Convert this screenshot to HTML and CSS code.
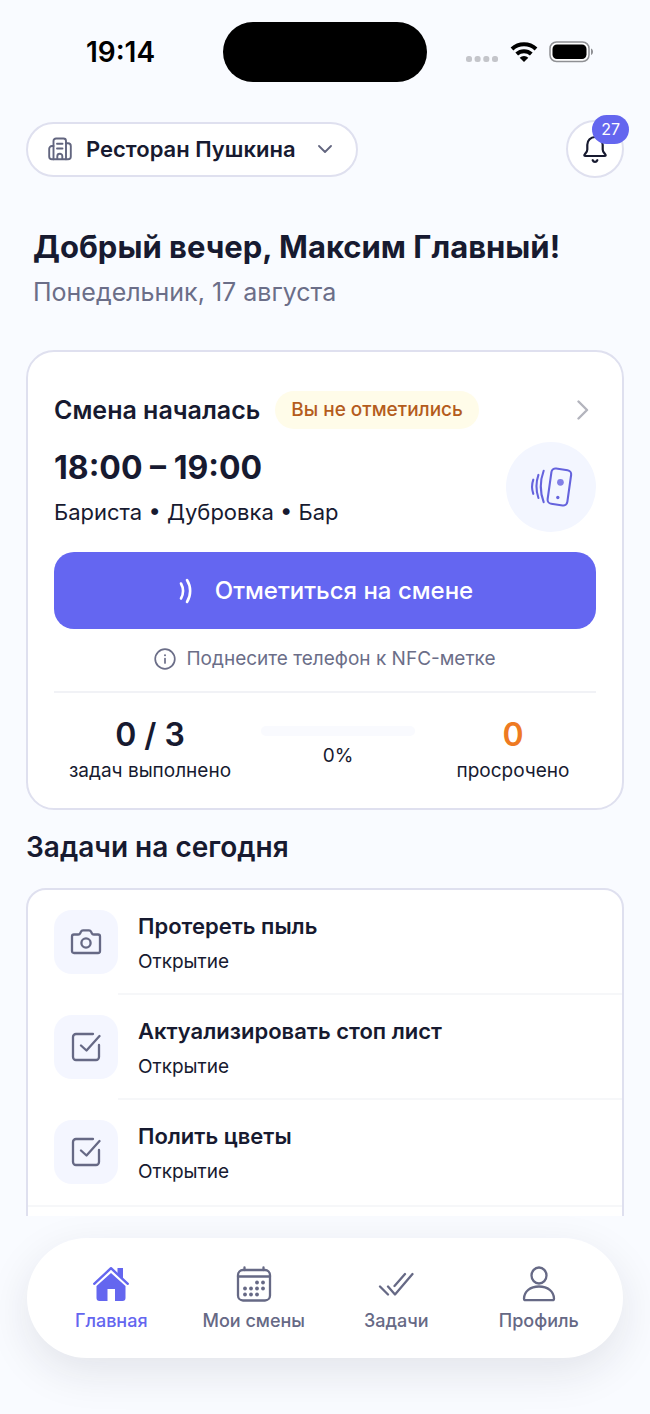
FILE: index.html
```html
<!DOCTYPE html>
<html lang="ru">
<head>
<meta charset="utf-8">
<meta name="viewport" content="width=device-width, initial-scale=1">
<title>Главная</title>
<link rel="stylesheet" href="styles.css">
</head>
<body>
<div class="status">
  <time class="status-time">19:14</time>
  <div class="island"></div>
  <div class="status-icons">
    <svg width="34" height="8" viewBox="0 0 34 8" fill="#c4c5ca"><rect x="1" y="1" width="6" height="6" rx="2.5"/><rect x="9.600" y="1" width="6" height="6" rx="2.500"/><rect x="18.300" y="1" width="6" height="6" rx="2.500"/><rect x="27" y="1" width="6" height="6" rx="2.500"/></svg>
    <svg class="wifi" width="28" height="22" viewBox="0 0 28 22" fill="none" stroke="#000" stroke-width="4"><path d="M2 8a17.500 17.500 0 0 1 24 0"/><path d="M6.700 13a10.800 10.800 0 0 1 14.600 0"/><path d="M14 21l-4.300-4.300a6.200 6.200 0 0 1 8.600 0z" fill="#000" stroke="none"/></svg>
    <svg width="46" height="22" viewBox="0 0 46 22"><rect x="1" y="1" width="39" height="19.500" rx="6.500" fill="#fff" stroke="#8f9094" stroke-width="1.500"/><rect x="3.500" y="3.500" width="34" height="14.500" rx="4.500"/><path d="M42 7.500c2.700 1 2.700 5.500 0 6.500z" fill="#8f9094"/></svg>
  </div>
</div>

<main class="content">
  <header class="topbar">
    <button class="place" type="button" aria-haspopup="listbox">
      <svg width="24" height="24" viewBox="0 0 24 24" fill="none" stroke="#62657f" stroke-width="1.900" stroke-linecap="round" stroke-linejoin="round"><path d="M5.500 22.300V4a2.500 2.500 0 0 1 2.500-2.500h7.500A2.500 2.500 0 0 1 18 4v18.300"/><path d="M5.500 9H4a2.800 2.800 0 0 0-2.800 2.800v7.700A2.800 2.800 0 0 0 4 22.300h16a2.800 2.800 0 0 0 2.800-2.800V9A2.800 2.800 0 0 0 20 6.200h-2"/><path d="M9 6.800h5.500M9 11.500h5.500M9.300 22v-2.800a2.500 2.500 0 0 1 5 0V22"/></svg>
      <span>Ресторан Пушкина</span>
      <svg class="place-arrow" width="14" height="8" viewBox="0 0 14 8" fill="none" stroke="#62657f" stroke-width="1.800" stroke-linecap="round" stroke-linejoin="round"><path d="M1 1l6 6 6-6"/></svg>
    </button>
    <button class="bell" type="button" aria-label="Уведомления">
      <svg width="26" height="28" viewBox="0 0 26 28" fill="none" stroke="#171a30" stroke-width="2.200" stroke-linecap="round" stroke-linejoin="round"><path d="M5.300 14.500V9.700a7.700 7.700 0 0 1 15.400 0v4.800c0 2 1 2.800 2.400 4.600 1 1.300.7 1.900-.7 1.900H3.600c-1.400 0-1.700-.6-.7-1.900 1.400-1.800 2.400-2.600 2.400-4.600z"/><path d="M10.700 25.200c.9 2.100 3.700 2.100 4.600 0"/></svg>
      <span class="badge">27</span>
    </button>
  </header>

  <section class="greeting">
    <h1>Добрый вечер, Максим Главный!</h1>
    <p>Понедельник, 17 августа</p>
  </section>

  <section class="card shift">
    <div class="shift-head">
      <h2>Смена началась</h2>
      <span class="chip">Вы не отметились</span>
      <svg class="shift-arrow" width="12" height="20" viewBox="0 0 12 20" fill="none" stroke="#b3b4bd" stroke-width="2.400" stroke-linecap="round" stroke-linejoin="round"><path d="M1.500 1.500L10 10l-8.500 8.500"/></svg>
    </div>
    <div class="shift-body">
      <div class="shift-info">
        <strong>18:00 – 19:00</strong>
        <span>Бариста • Дубровка • Бар</span>
      </div>
      <div class="nfc">
        <svg width="44" height="42" viewBox="0 0 42 40" fill="none" stroke="#6563dd" stroke-width="2" stroke-linecap="round" stroke-linejoin="round"><rect x="19.500" y="3" width="19" height="34" rx="4" transform="rotate(8 29 20)"/><circle cx="30" cy="15.500" r="3.200" fill="#817fe6" stroke="none"/><circle cx="27.500" cy="30" r="1.600" fill="#6563dd" stroke="none"/><path d="M14 4.500c-3.600 9.800-3.600 20.200 0 30M9 8.500c-2.600 7.500-2.600 14.500 0 22M4.100 13c-1.600 4.600-1.600 9 0 13.500"/></svg>
      </div>
    </div>
    <button class="primary" type="button">
      <svg width="16" height="28" viewBox="0 0 16 28" fill="none" stroke="#fff" stroke-width="2.600" stroke-linecap="round"><path d="M4 6.500c2.600 4.700 2.600 10.300 0 15M10 3c4.200 6.700 4.200 15.300 0 22"/></svg>
      <span>Отметиться на смене</span>
    </button>
    <p class="hint">
      <svg width="22" height="22" viewBox="0 0 22 22" fill="none" stroke="#6b6e88" stroke-width="1.700" stroke-linecap="round"><circle cx="11" cy="11" r="9.800"/><path d="M11 10.500v4.500"/><circle cx="11" cy="7.200" r="1" fill="#6b6e88" stroke="none"/></svg>
      <span>Поднесите телефон к NFC-метке</span>
    </p>
    <div class="stats">
      <div class="stat"><strong>0 / 3</strong><span>задач выполнено</span></div>
      <div class="stat progress"><div class="bar"></div><span>0%</span></div>
      <div class="stat late"><strong>0</strong><span>просрочено</span></div>
    </div>
  </section>

  <h2 class="section-title">Задачи на сегодня</h2>

  <ul class="card tasks">
    <li class="task">
      <div class="tile"><svg width="32" height="28" viewBox="0 0 32 28" fill="none" stroke="#666985" stroke-width="2.300" stroke-linecap="round" stroke-linejoin="round"><path d="M4 6.500h4.200c1 0 1.600-.4 2-1.300l.7-1.400C11.400 2.700 12 2.300 13 2.300h6c1 0 1.600.4 2.100 1.500l.7 1.400c.4.900 1 1.300 2 1.300H28c1.400 0 2 .7 2 2V23c0 1.400-.7 2-2 2H4c-1.300 0-2-.6-2-2V8.500c0-1.300.6-2 2-2z"/><circle cx="16" cy="15" r="4.600"/></svg></div>
      <div class="task-text"><h3>Протереть пыль</h3><p>Открытие</p></div>
    </li>
    <li class="task">
      <div class="tile"><svg width="30" height="30" viewBox="0 0 30 30" fill="none" stroke="#666985" stroke-width="2.300" stroke-linecap="round" stroke-linejoin="round"><path d="M22 2H5a3 3 0 0 0-3 3v20a3 3 0 0 0 3 3h20a3 3 0 0 0 3-3V13"/><path d="M10 13.500l5.500 5L28.500 4"/></svg></div>
      <div class="task-text"><h3>Актуализировать стоп лист</h3><p>Открытие</p></div>
    </li>
    <li class="task">
      <div class="tile"><svg width="30" height="30" viewBox="0 0 30 30" fill="none" stroke="#666985" stroke-width="2.300" stroke-linecap="round" stroke-linejoin="round"><path d="M22 2H5a3 3 0 0 0-3 3v20a3 3 0 0 0 3 3h20a3 3 0 0 0 3-3V13"/><path d="M10 13.500l5.500 5L28.500 4"/></svg></div>
      <div class="task-text"><h3>Полить цветы</h3><p>Открытие</p></div>
    </li>
  </ul>
</main>

<nav class="tabbar">
  <a class="tab active" href="#home" aria-current="page">
    <svg width="36" height="36" viewBox="0 0 36 36" fill="#6466ef"><path d="M18 7l14.500 13V32a3 3 0 0 1-3 3H22V23h-7.500v12H6.500a3 3 0 0 1-3-3V20z"/><path d="M1.200 17.500L18 2.500l16.800 15" fill="none" stroke="#fff" stroke-width="5.500"/><path d="M1.200 17.800L18 2.200l16.800 15.600" fill="none" stroke="#6466ef" stroke-width="2.400" stroke-linecap="round" stroke-linejoin="round"/><path d="M24.500 2h5.500v11l-5.500-5z"/></svg>
    <span>Главная</span>
  </a>
  <a class="tab" href="#shifts">
    <svg width="36" height="36" viewBox="0 0 36 36" fill="none" stroke="#666985" stroke-width="2.300" stroke-linecap="round"><rect x="2" y="4" width="32" height="30.500" rx="5"/><path d="M2 10.500h32M8.500 1.500V4M27.500 1.500V4"/><g fill="#666985" stroke="none"><circle cx="21" cy="16.500" r="1.900"/><circle cx="27" cy="16.500" r="1.900"/><circle cx="9" cy="22.500" r="1.900"/><circle cx="15" cy="22.500" r="1.900"/><circle cx="21" cy="22.500" r="1.900"/><circle cx="27" cy="22.500" r="1.900"/><circle cx="9" cy="28.500" r="1.900"/><circle cx="15" cy="28.500" r="1.900"/><circle cx="21" cy="28.500" r="1.900"/></g></svg>
    <span>Мои смены</span>
  </a>
  <a class="tab" href="#tasks">
    <svg width="36" height="36" viewBox="0 0 36 36" fill="none" stroke="#666985" stroke-width="2.300" stroke-linecap="round" stroke-linejoin="round"><path d="M2 20.500L10 28.500M10 20.500l7 8L34.500 8M16.500 20L27 8"/></svg>
    <span>Задачи</span>
  </a>
  <a class="tab" href="#profile">
    <svg width="36" height="36" viewBox="0 0 36 36" fill="none" stroke="#666985" stroke-width="2.300" stroke-linejoin="round"><ellipse cx="18" cy="9.500" rx="7.500" ry="8"/><path d="M3 32.500c.3-7 6-12 15-12s14.700 5 15 12c0 1-.5 1.700-1.600 1.700H4.600C3.500 34.200 3 33.500 3 32.500z"/></svg>
    <span>Профиль</span>
  </a>
</nav>
</body>
</html>
```
FILE: styles.css
```css
* { box-sizing: border-box; }

body {
  margin: 0;
  height: 100vh;
  display: flex;
  flex-direction: column;
  overflow: hidden;
  background: #f9fbff;
  color: #171a30;
  font-family: Inter, "Noto Sans", sans-serif;
}

h1, h2, h3, p, ul { margin: 0; padding: 0; }
ul { list-style: none; }
button { font: inherit; color: inherit; cursor: pointer; }
svg { display: block; flex: none; }

.status {
  flex: none;
  display: grid;
  grid-template-columns: 1fr 204px 1fr;
  align-items: center;
  padding: 22px 26px 0;
}
.status-time {
  justify-self: center;
  padding-right: 8px;
  font-size: 28px;
  font-weight: 600;
  color: #000;
}
.island { height: 60px; border-radius: 30px; background: #000; }
.status-icons {
  display: flex;
  align-items: center;
  justify-content: flex-end;
  gap: 11px;
  padding-right: 29px;
}
.status-icons svg:first-child { margin-top: 14px; }

.content {
  flex: 1;
  min-height: 0;
  overflow: hidden;
  position: relative;
  z-index: 1;
  padding: 38px 26px 0;
}

.topbar { display: flex; align-items: center; justify-content: space-between; }
.place {
  display: flex;
  align-items: center;
  height: 55px;
  padding: 0 24px 0 20px;
  border: 2px solid #dfe0ef;
  border-radius: 28px;
  background: #fff;
  font-size: 22px;
  font-weight: 600;
}
.place span { margin: 0 22px 0 14px; }
.bell {
  position: relative;
  display: grid;
  place-items: center;
  width: 58px;
  height: 58px;
  padding: 0;
  border: 2px solid #dfe0ef;
  border-radius: 50%;
  background: #fff;
}
.badge {
  position: absolute;
  top: -7px;
  right: -7px;
  padding: 0 9px;
  border-radius: 15px;
  background: #6466ef;
  color: #fff;
  font-size: 16px;
  line-height: 29px;
}

.greeting { padding: 46px 7px 0; }
.greeting h1 { font-size: 31px; line-height: 46px; font-weight: 700; }
.greeting p { font-size: 25px; line-height: 44px; color: #6b6e88; }

.card { border: 2px solid #dfe0ef; border-radius: 28px; background: #fff; }

.shift { margin-top: 36px; padding: 39px 26px 23px; }
.shift-head { display: flex; align-items: center; }
.shift-head h2 { font-size: 25px; line-height: 38px; font-weight: 600; }
.chip {
  margin-left: 15px;
  padding: 0 16px;
  border-radius: 19px;
  background: #fffce9;
  color: #b45c1c;
  font-size: 19px;
  font-weight: 500;
  line-height: 38px;
}
.shift-arrow { margin: 0 7px 0 auto; }
.shift-body {
  display: flex;
  align-items: flex-end;
  justify-content: space-between;
  margin-top: 13px;
}
.shift-info { display: flex; flex-direction: column; gap: 4px; line-height: 40px; }
.shift-info strong { font-size: 32px; font-weight: 700; }
.shift-info span { font-size: 22px; }
.nfc {
  display: grid;
  place-items: center;
  width: 90px;
  height: 90px;
  border-radius: 50%;
  background: #f3f6ff;
}
.primary {
  display: flex;
  align-items: center;
  justify-content: center;
  gap: 22px;
  width: 100%;
  height: 77px;
  margin-top: 20px;
  border: 0;
  border-radius: 20px;
  background: #6466f1;
  color: #fff;
  font-size: 24px;
  font-weight: 500;
}
.hint {
  display: flex;
  align-items: center;
  justify-content: center;
  gap: 10px;
  margin-top: 14px;
  color: #6b6e88;
  font-size: 19px;
  line-height: 32px;
}
.stats {
  display: grid;
  grid-template-columns: 192fr 184fr 166fr;
  margin-top: 16px;
  padding-top: 22px;
  border-top: 2px solid #f1f2f6;
}
.stat { display: flex; flex-direction: column; align-items: center; gap: 2px; }
.stat strong { font-size: 32px; line-height: 40px; font-weight: 600; }
.stat span { font-size: 19px; line-height: 28px; }
.progress { padding: 11px 15px 0; gap: 6px; }
.bar { width: 100%; height: 10px; border-radius: 5px; background: #f9fafe; }
.late strong { color: #ee7a22; }

.section-title { margin: 17px 0 21px; font-size: 28px; line-height: 40px; font-weight: 600; }

.tasks { min-height: 420px; border-radius: 20px; }
.task { display: flex; padding-left: 26px; }
.tile {
  display: grid;
  place-items: center;
  width: 64px;
  height: 64px;
  margin: 20px 0 21px;
  border-radius: 18px;
  background: #f4f6ff;
}
.task-text {
  flex: 1;
  padding: 18px 20px 0;
  border-bottom: 2px solid #f6f7f9;
}
.task-text h3 { font-size: 22px; line-height: 36px; font-weight: 600; }
.task-text p { font-size: 19px; line-height: 36px; }
.task:last-child { border-bottom: 2px solid #f6f7f9; }
.task:last-child .task-text { border-bottom: 0; }

.tabbar {
  flex: none;
  display: grid;
  grid-template-columns: repeat(4, 1fr);
  margin: 22px 27px 56px;
  padding: 28px 13px 25px;
  border-radius: 60px;
  background: #fff;
  box-shadow: 0 14px 44px rgba(30, 32, 50, 0.1);
}
.tab {
  display: flex;
  flex-direction: column;
  align-items: center;
  gap: 7px;
  color: #666985;
  font-size: 18px;
  font-weight: 500;
  line-height: 24px;
  text-decoration: none;
}
.active { color: #6466ef; }
```
